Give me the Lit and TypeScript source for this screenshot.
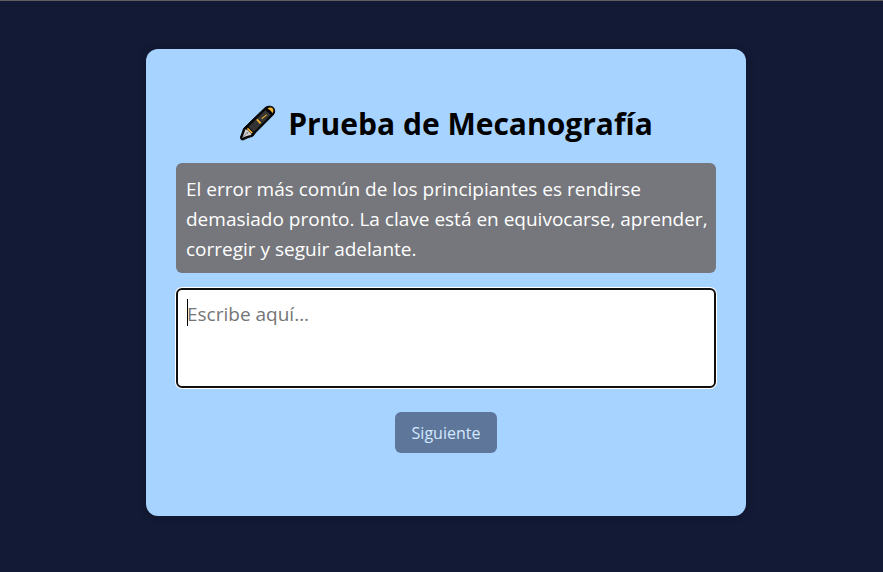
import { LitElement, html, css, svg } from "lit";
import { customElement, state } from "lit/decorators.js";

const pen = svg`
  <path d="M2 34.500 L1.500 32 C3 29 3.700 26 4.500 23.500 L8.500 19.500 L26 2.700 C28.500 .700 32.500 .700 34.500 2.700 C36.300 4.700 36 8 34.200 10 L16.500 27.800 L13.800 31.300 C10.500 32 7 33.500 4 35 Z" fill="#050505" stroke="#050505" stroke-width="1" stroke-linejoin="round"/>
  <path d="M9.500 21.800 L26.500 5 L31.800 9.800 L14.800 27 Z" fill="#333"/>
  <path d="M28.500 3.600 C30.500 2.200 32.700 2.400 33.700 3.600 C34.800 5 34.500 6.800 33.300 8.300 C32.500 6.500 30.700 4.600 28.500 3.600 Z" fill="#fbb62d"/>
  <path d="M17.900 14.300 L21.600 18.300" stroke="#f8b52f" stroke-width="1.700"/>
  <path d="M22.700 13.800 L27.800 9.600" stroke="#e0a52e" stroke-width="1.200"/>
  <path d="M9 22.700 L13.900 27.400 L12.600 28.400 L7.900 24 Z" fill="#f8b52f"/>
  <path d="M6.200 24.500 L8 24.700 L12.200 28.600 L12.200 29.900 C8.500 30.500 5.500 31.500 3.300 32.900 C4.600 29.500 5.600 27 6.200 24.500 Z" fill="#cecece"/>
  <path d="M3.300 32.700 L7.800 28.200" stroke="#777" stroke-width=".700"/>
  <circle cx="8.200" cy="28" r=".700" fill="#555"/>`;

@customElement("app-root")
export class AppRoot extends LitElement {
  @state() private typed = "";

  static styles = css`
    :host {
      display: flex;
      justify-content: center;
      box-sizing: border-box;
      min-height: 100vh;
      padding: 48px 0 56px 9px;
      border-top: 1px solid #5f5f5f;
      background: #131a35;
      color: #000;
      font-family: "Segoe UI", "Open Sans", "Noto Sans", sans-serif;
    }
    * {
      box-sizing: border-box;
    }
    .card {
      display: flex;
      flex-direction: column;
      align-items: center;
      align-self: flex-start;
      width: 100%;
      max-width: 600px;
      padding: 52px 30px 63px;
      border-radius: 12px;
      background: #a6d3ff;
      box-shadow: 0 0 10px rgba(0, 0, 0, 0.2);
    }
    .title {
      display: flex;
      align-items: center;
      gap: 12px;
      margin: 0 0 16px;
      font-size: 30px;
      line-height: 46px;
      font-weight: 700;
    }
    .pen {
      width: 37px;
      height: 37px;
      overflow: visible;
    }
    .sample {
      width: 100%;
      margin: 0 0 15px;
      padding: 11px 6px 9px 10px;
      border-radius: 6px;
      background: #76777c;
      color: #fff;
      font-size: 19px;
      line-height: 30px;
    }
    .field {
      position: relative;
      width: 100%;
      margin-bottom: 24px;
    }
    .entry {
      display: block;
      width: 100%;
      height: 100px;
      padding: 10px 9px;
      border: 2px solid #101010;
      border-radius: 6px;
      outline: 0;
      box-shadow: 0 0 0 1px #fff;
      resize: none;
      background: #fff;
      color: #000;
      caret-color: transparent;
      font: inherit;
      font-size: 19px;
      line-height: 28px;
    }
    .entry::placeholder {
      color: #757575;
      opacity: 1;
    }
    .caret {
      position: absolute;
      top: 11px;
      left: 11px;
      width: 1px;
      height: 27px;
      background: #000;
    }
    .next {
      padding: 11px 17px 9px;
      border: 0;
      border-radius: 6px;
      background: #5f769b;
      color: #d2e9ff;
      font: inherit;
      font-size: 16px;
      line-height: 21px;
    }
  `;

  private onInput(e: Event) {
    this.typed = (e.target as HTMLTextAreaElement).value;
  }

  render() {
    return html`
      <main class="card">
        <h1 class="title">
          <svg class="pen" viewBox="0 1 37 37" aria-hidden="true">${pen}</svg>
          <span>Prueba de Mecanografía</span>
        </h1>
        <p class="sample" id="sample">
          El error más común de los principiantes es rendirse demasiado pronto.
          La clave está en equivocarse, aprender, corregir y seguir adelante.
        </p>
        <div class="field">
          <textarea
            class="entry"
            aria-labelledby="sample"
            placeholder="Escribe aquí..."
            @input=${this.onInput}
          ></textarea>
          ${this.typed ? null : html`<span class="caret"></span>`}
        </div>
        <button class="next" type="button" ?disabled=${!this.typed}>Siguiente</button>
      </main>
    `;
  }
}
